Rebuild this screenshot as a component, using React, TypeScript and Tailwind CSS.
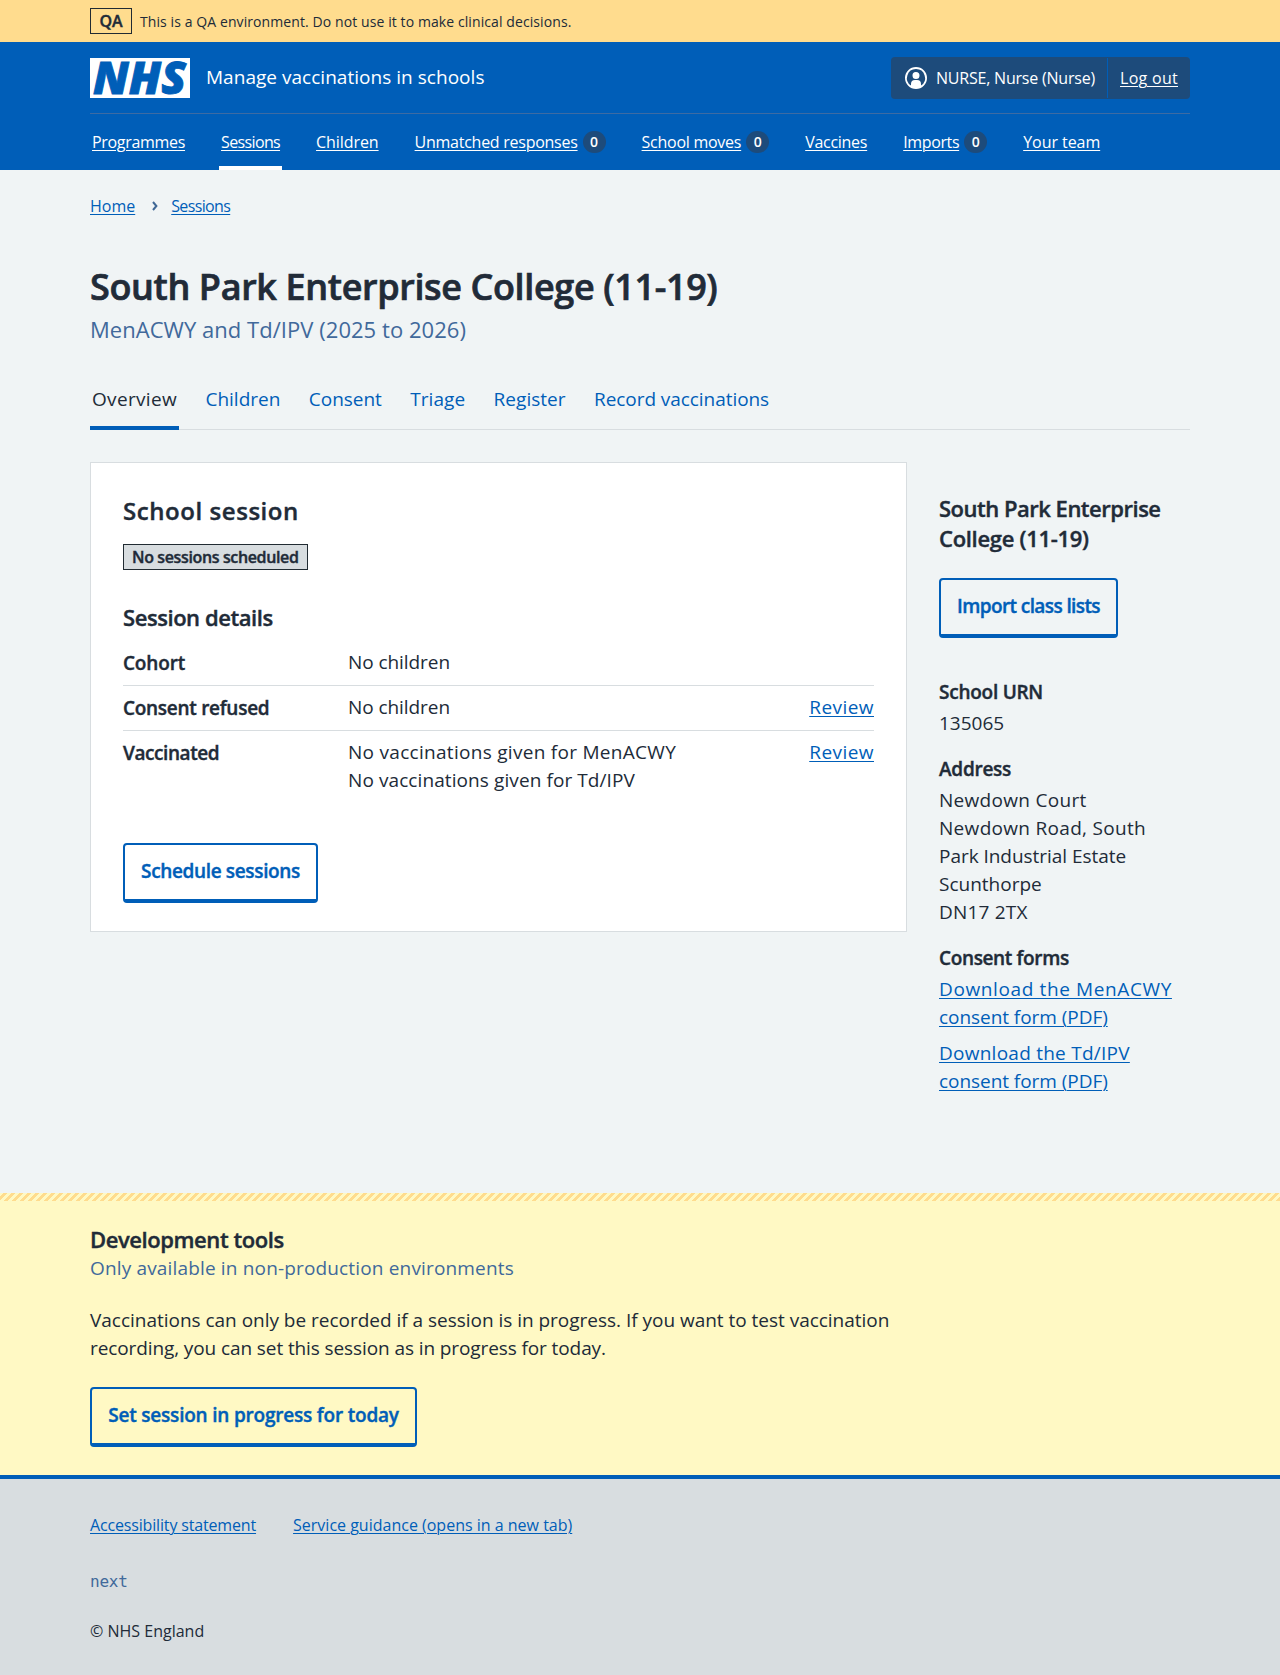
import React from "react";

const navItems = [
  { label: "Programmes", track: "tracking-[-0.31px]" },
  { label: "Sessions", track: "tracking-[-0.64px]", current: true },
  { label: "Children", track: "tracking-[-0.07px]" },
  { label: "Unmatched responses", track: "tracking-[-0.26px]", count: 0 },
  { label: "School moves", track: "tracking-[-0.26px]", count: 0 },
  { label: "Vaccines", track: "tracking-[-0.28px]" },
  { label: "Imports", track: "tracking-[-0.37px]", count: 0 },
  { label: "Your team", track: "tracking-[-0.05px]" },
];

const tabs = [
  { label: "Overview", track: "tracking-[0.33px]", current: true },
  { label: "Children", track: "tracking-[0.01px]" },
  { label: "Consent", track: "tracking-[-0.03px]" },
  { label: "Triage", track: "tracking-[0.07px]" },
  { label: "Register", track: "tracking-[0.03px]" },
  { label: "Record vaccinations", track: "tracking-[-0.06px]" },
];

const link = "text-[#005eb8] underline decoration-1 underline-offset-[2px]";
const strong = "font-semibold [-webkit-text-stroke:0.4px_currentColor]";

function NhsLogo() {
  return (
    <svg width="100" height="40" viewBox="0 0 100 40" role="img" aria-label="NHS" className="block overflow-visible bg-white">
      <text
        x="3"
        y="36"
        textLength="93"
        lengthAdjust="spacingAndGlyphs"
        fill="#005eb8"
        stroke="#005eb8"
        strokeWidth="0.9"
        className="font-['Open_Sans',sans-serif] text-[45px] font-extrabold italic"
      >
        NHS
      </text>
    </svg>
  );
}

function Button({ children, className }: { children: React.ReactNode; className: string }) {
  return (
    <button
      className={`block h-[60px] rounded-[4px] border-2 border-b-4 border-[#005eb8] pt-3 text-center align-top text-[19px] leading-7 whitespace-nowrap text-[#005eb8] ${strong} ${className}`}
    >
      <span className="block h-[42px]">{children}</span>
    </button>
  );
}

function Header() {
  return (
    <header className="h-[128px] bg-[#005eb8] text-white">
      <div className="mx-auto w-[1100px]">
        <div className="flex h-[72px] items-center border-b border-[#3d6ba3] pt-px">
          <NhsLogo />
          <span className="ml-4 pb-0.5 text-[19px] leading-7 tracking-[0.03px]">Manage vaccinations in schools</span>
          <div className="ml-auto flex h-[42px] w-[299px] overflow-hidden rounded-[4px] bg-[#1d4b7b] text-[16px] leading-6">
            <div className="flex w-[216px] items-center pl-[13px]">
              <svg width="24" height="24" viewBox="0 0 24 24" fill="white" className="mr-2">
                <path d="M12 1a11 11 0 1 1 0 22 11 11 0 0 1 0-22Zm0 2a9 9 0 0 0-5 16.5V18a4 4 0 0 1 4-4h2a4 4 0 0 1 4 4v1.5A9 9 0 0 0 12 3Zm0 3a3.5 3.5 0 1 1-3.5 3.5A3.4 3.4 0 0 1 12 6Z" />
              </svg>
              <span className="tracking-[-0.21px] whitespace-nowrap">NURSE, Nurse (Nurse)</span>
            </div>
            <div className="my-px flex flex-1 items-center border-l border-[#005eb8] pl-3">
              <a className="tracking-[0.29px] underline decoration-1 underline-offset-[2px]">Log out</a>
            </div>
          </div>
        </div>
        <nav className="flex h-14 gap-8 text-[16px] leading-6">
          {navItems.map((item) => (
            <div
              key={item.label}
              className={`flex h-14 items-center px-0.5 whitespace-nowrap ${item.current ? "border-b-4 border-white pt-1" : ""}`}
            >
              <a className={`underline decoration-1 underline-offset-[2px] ${item.track}`}>{item.label}</a>
              {item.count !== undefined && (
                <span className="ml-[5px] flex h-[22px] w-[23px] items-center justify-center rounded-full bg-[#1d4b7b] text-[14px] leading-none font-semibold">
                  {item.count}
                </span>
              )}
            </div>
          ))}
        </nav>
      </div>
    </header>
  );
}

function SessionCard() {
  return (
    <section className="h-[470px] w-[817px] border border-[#d8dde0] bg-white px-8 pt-8">
      <h2 className={`text-[24px] leading-8 tracking-[0.56px] ${strong}`}>School session</h2>
      <div
        className={`mt-[17px] h-[26px] w-[185px] border border-[#212b32] bg-[#d8dde0] pl-2 text-[16px] leading-6 tracking-[-0.37px] whitespace-nowrap ${strong}`}
      >
        No sessions scheduled
      </div>
      <h3 className={`mt-8 text-[22px] leading-[30px] tracking-[-0.44px] ${strong}`}>Session details</h3>
      <dl className="mt-[9px] text-[19px] leading-7">
        <div className="flex border-b border-[#d8dde0] pt-[7px] pb-[9px]">
          <dt className={`-mb-px w-[225px] pt-px tracking-[-0.17px] ${strong}`}>Cohort</dt>
          <dd className="tracking-[-0.07px]">No children</dd>
        </div>
        <div className="flex border-b border-[#d8dde0] pt-[7px] pb-[9px]">
          <dt className={`-mb-px w-[225px] pt-px tracking-[-0.28px] ${strong}`}>Consent refused</dt>
          <dd className="tracking-[-0.07px]">No children</dd>
          <dd className="ml-auto">
            <a className={`${link} tracking-[0.45px]`}>Review</a>
          </dd>
        </div>
        <div className="flex pt-[7px]">
          <dt className={`w-[225px] pt-px tracking-[-0.42px] ${strong}`}>Vaccinated</dt>
          <dd>
            <div className="tracking-[0.29px]">No vaccinations given for MenACWY</div>
            <div className="tracking-[0.09px]">No vaccinations given for Td/IPV</div>
          </dd>
          <dd className="ml-auto">
            <a className={`${link} tracking-[0.45px]`}>Review</a>
          </dd>
        </div>
      </dl>
      <Button className="mt-[49px] w-[195px] tracking-[-0.35px]">Schedule sessions</Button>
    </section>
  );
}

function Sidebar() {
  return (
    <aside className="w-[251px] pt-[31px] text-[19px] leading-7 whitespace-nowrap">
      <h2 className={`text-[22px] leading-[30px] ${strong}`}>
        <span className="block tracking-[-0.49px]">South Park Enterprise</span>
        <span className="block tracking-[-0.3px]">College (11-19)</span>
      </h2>
      <Button className="mt-[25px] w-[179px] tracking-[-0.6px]">Import class lists</Button>
      <h3 className={`mt-10 tracking-[-0.25px] ${strong}`}>School URN</h3>
      <p className="mt-[3px]">135065</p>
      <h3 className={`mt-[18px] tracking-[-0.25px] ${strong}`}>Address</h3>
      <address className="mt-[3px] not-italic">
        <span className="block tracking-[0.3px]">Newdown Court</span>
        <span className="block tracking-[0.31px]">Newdown Road, South</span>
        <span className="block tracking-[-0.04px]">Park Industrial Estate</span>
        <span className="block">Scunthorpe</span>
        <span className="block tracking-[0.2px]">DN17 2TX</span>
      </address>
      <h3 className={`mt-[18px] tracking-[-0.36px] ${strong}`}>Consent forms</h3>
      <a className={`mt-[3px] block ${link}`}>
        <span className="tracking-[0.62px]">Download the MenACWY</span>
        <br />
        <span className="tracking-[-0.05px]">consent form (PDF)</span>
      </a>
      <a className={`mt-2 block ${link}`}>
        <span className="tracking-[0.25px]">Download the Td/IPV</span>
        <br />
        <span className="tracking-[-0.05px]">consent form (PDF)</span>
      </a>
    </aside>
  );
}

export default function App() {
  return (
    <div className="min-h-[1675px] bg-[#f0f4f5] font-['Open_Sans',sans-serif] text-[#212b38]">
      <div className="h-[42px] bg-[#ffdc8e]">
        <div className="mx-auto flex h-[42px] w-[1100px] items-center">
          <span
            className={`flex h-[26px] w-[42px] items-center justify-center border border-[#212b32] text-[16px] leading-6 ${strong}`}
          >
            QA
          </span>
          <span className="ml-2 pt-0.5 text-[14px] leading-6 tracking-[0.09px]">
            This is a QA environment. Do not use it to make clinical decisions.
          </span>
        </div>
      </div>
      <Header />
      <main className="mx-auto w-[1100px] pt-6 pb-[98px]">
        <nav className="flex h-6 items-center text-[16px] leading-6">
          <a className={link}>Home</a>
          <svg width="6" height="10" viewBox="0 0 6 10" className="mr-[13px] ml-[17px]" fill="none" stroke="#3f6795" strokeWidth="2">
            <path d="M1 1l3.4 4L1 9" />
          </svg>
          <a className={`${link} tracking-[-0.64px]`}>Sessions</a>
        </nav>
        <h1 className="mt-[47px] text-[36px] leading-[44px] font-semibold tracking-[-0.37px] [-webkit-text-stroke:0.7px_currentColor]">
          South Park Enterprise College (11-19)
        </h1>
        <p className="mt-1 text-[22px] leading-8 tracking-[0.04px] text-[#41699b]">MenACWY and Td/IPV (2025 to 2026)</p>
        <nav className="mt-10 flex gap-[24.4px] text-[19px] leading-7 shadow-[inset_0_-1px_0_#d8dde0]">
          {tabs.map((t) => (
            <a
              key={t.label}
              className={`border-b-4 px-0.5 pb-[13px] ${t.track} ${t.current ? "border-[#005eb8]" : "border-transparent text-[#005eb8]"}`}
            >
              {t.label}
            </a>
          ))}
        </nav>
        <div className="mt-8 flex gap-8">
          <SessionCard />
          <Sidebar />
        </div>
      </main>
      <section className="bg-[#fff9c4] pb-7">
        <div className="h-2 bg-[repeating-linear-gradient(-45deg,#ffdc8e_0,#ffdc8e_2.828px,#fff9c4_2.828px,#fff9c4_5.657px)]" />
        <div className="mx-auto w-[1100px] pt-[23px] text-[19px] leading-7">
          <h2 className={`text-[22px] leading-[30px] tracking-[-0.42px] ${strong}`}>Development tools</h2>
          <p className="tracking-[0.16px] text-[#41699b]">Only available in non-production environments</p>
          <p className="mt-6 whitespace-nowrap">
            <span className="block tracking-[-0.02px]">
              Vaccinations can only be recorded if a session is in progress. If you want to test vaccination
            </span>
            <span className="block tracking-[-0.1px]">
              recording, you can set this session as in progress for today.
            </span>
          </p>
          <Button className="mt-[25px] w-[327px] tracking-[-0.2px]">Set session in progress for today</Button>
        </div>
      </section>
      <footer className="h-[200px] border-t-4 border-[#005eb8] bg-[#d8dde0]">
        <div className="mx-auto w-[1100px] pt-[34px] text-[16px] leading-6">
          <div className="flex gap-[37px]">
            <a className={`${link} tracking-[-0.16px]`}>Accessibility statement</a>
            <a className={link}>Service guidance (opens in a new tab)</a>
          </div>
          <p className="mt-[33px] font-['DejaVu_Sans_Mono',monospace] tracking-[-0.2px] text-[#41699b]">next</p>
          <p className="mt-[25px]">© NHS England</p>
        </div>
      </footer>
    </div>
  );
}
